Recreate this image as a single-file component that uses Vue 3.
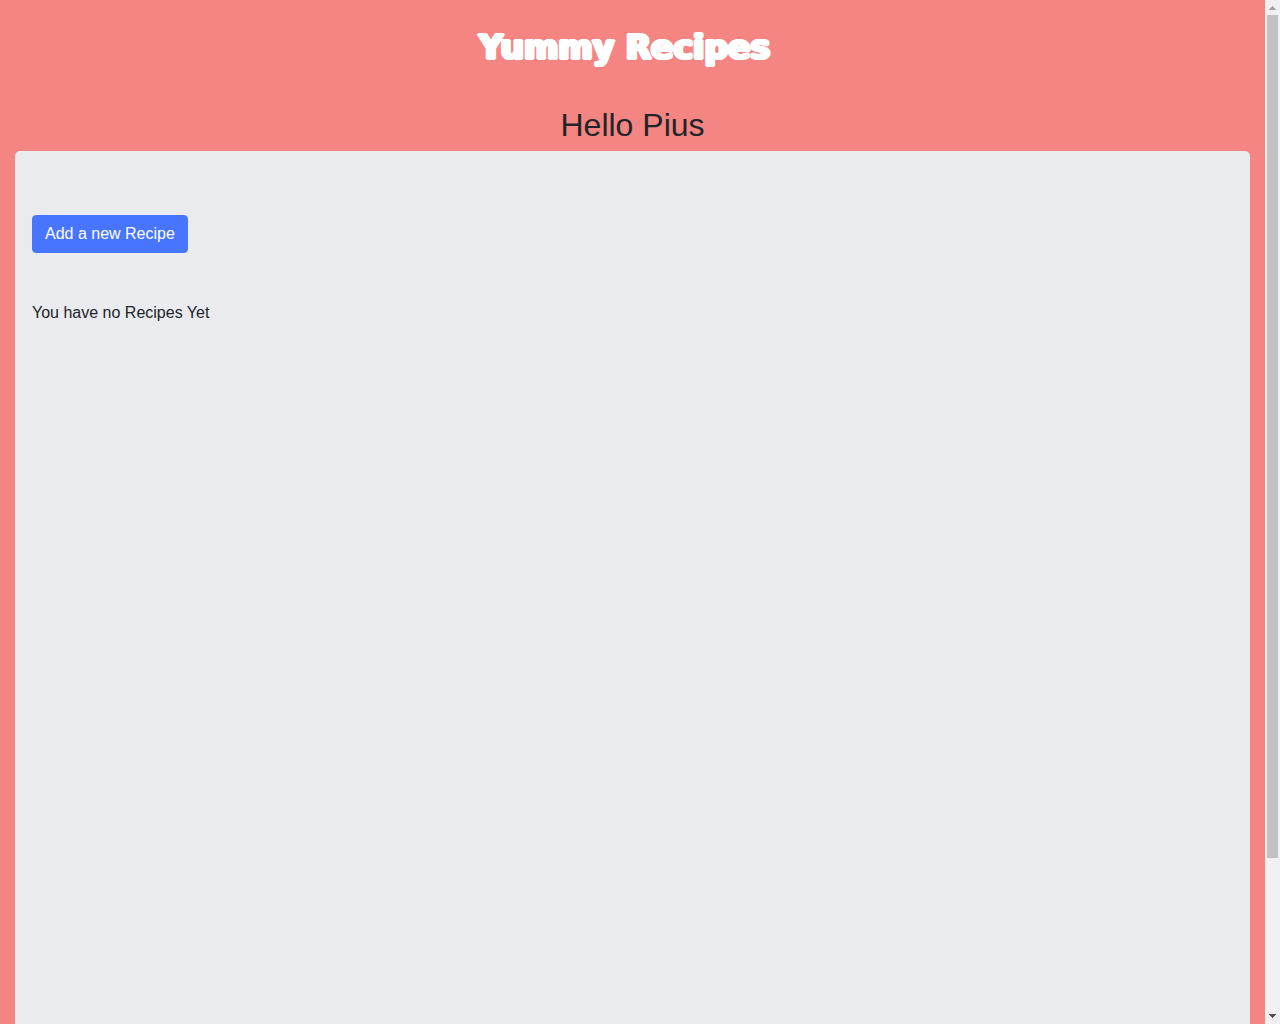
<script setup>
import { ref } from 'vue'

const userName = 'Pius'
const recipes = ref([])
</script>

<template>
  <div class="shell">
    <div class="page">
      <header class="navbar">
        <a class="brand" href="#">Yummy Recipes</a>
      </header>
      <main class="content">
        <h2 class="greeting">Hello {{ userName }}</h2>
        <section class="panel">
          <button class="add" type="button">Add a new Recipe</button>
          <p v-if="!recipes.length" class="empty">You have no Recipes Yet</p>
        </section>
      </main>
    </div>
    <div class="scrollbar" aria-hidden="true">
      <svg class="arrow" width="15" height="15" viewBox="0 0 15 15" shape-rendering="crispEdges">
        <path d="M7 6h1v1h1v1h1v1h1v1H4V9h1V8h1V7h1z" fill="#a3a3a3" />
      </svg>
      <div class="track"><div class="thumb"></div></div>
      <svg class="arrow" width="15" height="15" viewBox="0 0 15 15" shape-rendering="crispEdges">
        <path d="M4 5h7v1h-1v1H9v1H8v1H7V8H6V7H5V6H4z" fill="#505050" />
      </svg>
    </div>
  </div>
</template>

<style>
body {
  margin: 0;
  background: #f58582;
}
</style>

<style scoped>
.shell {
  display: flex;
  height: 100vh;
  overflow: hidden;
  color: #212529;
  background: #f58582;
  font: 16px/24px "Liberation Sans", Arial, sans-serif;
}
.page {
  flex: 1;
  display: flex;
  flex-direction: column;
}
.navbar {
  display: flex;
  justify-content: center;
  padding: 24px 16px;
}
.brand {
  margin-right: 16px;
  color: #fff;
  font: 700 33px/48px "DejaVu Sans", sans-serif;
  text-shadow: 2px 0 #fff, -2px 0 #fff, 0 1px #fff, 0 -1px #fff,
    1px 1px #fff, -1px 1px #fff, 1px -1px #fff, -1px -1px #fff;
  text-decoration: none;
  white-space: nowrap;
}
.content {
  flex: 1;
  display: flex;
  flex-direction: column;
  padding: 10px 15px 0;
}
.greeting {
  margin: 0 0 7px;
  font-size: 32px;
  font-weight: 500;
  line-height: 38px;
  text-align: center;
}
.panel {
  flex: 1;
  padding: 64px 17px 0;
  border-radius: 5px 5px 0 0;
  background: #e9ebee;
}
.add {
  display: block;
  padding: 6px 12px;
  border: 1px solid #4775ff;
  border-radius: 4px;
  color: #fff;
  background: #4775ff;
  font: inherit;
  cursor: pointer;
}
.empty {
  margin: 48px 0 16px;
}
.scrollbar {
  width: 15px;
  display: flex;
  flex-direction: column;
  background: #f1f1f1;
}
.arrow {
  display: block;
  flex: none;
}
.track {
  flex: 1;
  padding: 0 2px;
}
.thumb {
  height: 84.8%;
  background: #c1c1c1;
}
</style>
